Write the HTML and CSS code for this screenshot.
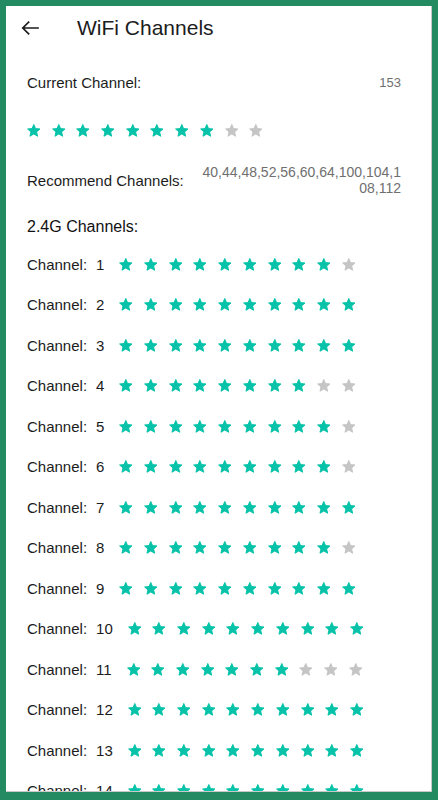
FILE: index.html
```html
<!DOCTYPE html>
<html lang="en">
  <head>
    <meta charset="UTF-8" />
    <meta name="viewport" content="width=device-width, initial-scale=1.0" />
    <title>WiFi Channels</title>
    <link rel="stylesheet" href="styles.css">
  </head>
  <body>
    <svg class="sprite" xmlns="http://www.w3.org/2000/svg">
      <symbol id="star" viewBox="1 1.2 22 21">
        <path
          d="M12 17.27L18.18 21l-1.64-7.03L22 9.24l-7.19-.61L12 2 9.19 8.63 2 9.24l5.46 4.73L5.82 21z"
          stroke-width="1.6"
          stroke-linejoin="round"
        />
      </symbol>
    </svg>

    <div class="screen">
      <header class="toolbar">
        <button class="back" aria-label="Back">
          <svg viewBox="0 0 18 14" xmlns="http://www.w3.org/2000/svg">
            <path d="M17 7H1.8M7.6 1.2L1.8 7l5.8 5.8" fill="none" stroke="#1c1c1c" stroke-width="1.7" stroke-linecap="square" />
          </svg>
        </button>
        <h1>WiFi Channels</h1>
      </header>

      <main class="content">
        <div class="row current">
          <span class="label">Current Channel:</span>
          <span class="value">153</span>
        </div>

        <div class="stars top-stars" data-score="8"></div>

        <div class="row recommend">
          <span class="label">Recommend Channels:</span>
          <span class="value wrap">40,44,48,52,56,60,64,100,104,108,112</span>
        </div>

        <h2>2.4G Channels:</h2>

        <ul class="channels" id="channels"></ul>
      </main>
    </div>

    <script>
      const scores = [9, 10, 10, 8, 9, 9, 10, 9, 10, 10, 7, 10, 10, 10];

      function starsHtml(score) {
        let html = "";
        for (let i = 0; i < 10; i++) {
          const cls = i < score ? "star on" : "star";
          html += `<svg class="${cls}"><use href="#star"></use></svg>`;
        }
        return html;
      }

      document.querySelectorAll(".stars[data-score]").forEach((el) => {
        el.innerHTML = starsHtml(Number(el.dataset.score));
      });

      const list = document.getElementById("channels");
      scores.forEach((score, i) => {
        const li = document.createElement("li");
        li.className = "channel";
        li.innerHTML =
          `<span class="label">Channel:</span>` +
          `<span class="num">${i + 1}</span>` +
          `<span class="stars">${starsHtml(score)}</span>`;
        list.appendChild(li);
      });
    </script>
  </body>
</html>
```

FILE: styles.css
```css
html,
body {
  margin: 0;
  height: 100%;
}

body {
  background-color: #238a61;
  font-family: "Liberation Sans", Arial, sans-serif;
  color: #1c1c1c;
  padding: 6px 6px 8px 6px;
  box-sizing: border-box;
  overflow: hidden;
}

.sprite {
  display: none;
}

.screen {
  background-color: #fff;
  height: 786px;
  width: 426px;
  box-sizing: border-box;
  border-right: 1px solid #c9c9c9;
  border-bottom: 1px solid #c9c9c9;
  overflow: hidden;
}

.toolbar {
  display: flex;
  align-items: center;
  height: 44px;
}

.back {
  display: flex;
  align-items: center;
  justify-content: center;
  border: none;
  background: none;
  padding: 0;
  margin-left: 15px;
  width: 18px;
  height: 24px;
}

.back svg {
  width: 18px;
  height: 14px;
}

.toolbar h1 {
  margin: 0 0 0 38px;
  font-size: 21px;
  font-weight: normal;
  color: #1c1c1c;
}

.content {
  padding: 0 30px 0 21px;
}

.row {
  display: flex;
  justify-content: space-between;
  align-items: center;
}

.label {
  font-size: 15px;
}

.value {
  font-size: 13px;
  color: #6f6f6f;
}

.current {
  margin-top: 20px;
  height: 24px;
}

.top-stars {
  margin-top: 29px;
  height: 14px;
}

.recommend {
  margin-top: 27px;
}

.value.wrap {
  width: 200px;
  font-size: 14px;
  line-height: 16px;
  text-align: right;
  word-break: break-all;
}

h2 {
  margin: 21px 0 0;
  height: 20px;
  line-height: 20px;
  font-size: 16px;
  font-weight: normal;
  color: #111;
}

.channels {
  list-style: none;
  margin: 6.75px 0 0;
  padding: 0;
}

.channel {
  display: flex;
  align-items: center;
  height: 40.5px;
}

.num {
  font-size: 15px;
  margin-left: 9px;
}

.stars {
  display: flex;
  align-items: center;
  gap: 11.1px;
}

.channel .stars {
  margin-left: 15px;
}

.star {
  width: 13.6px;
  height: 13px;
  fill: #c5c5c5;
  stroke: #c5c5c5;
}

.star.on {
  fill: #06c2a8;
  stroke: #06c2a8;
}
```
